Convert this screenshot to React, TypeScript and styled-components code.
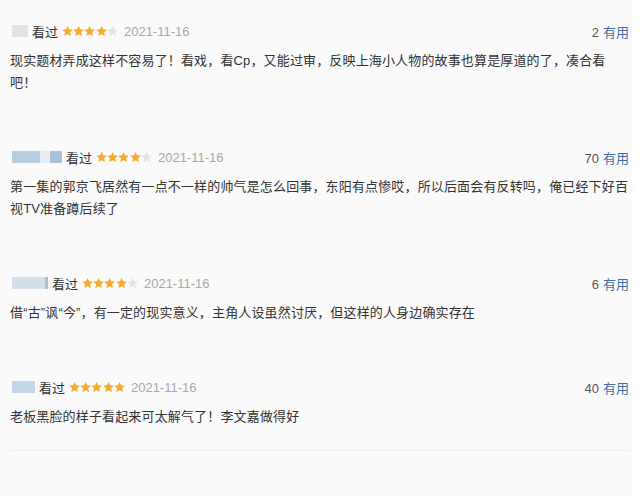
import React from "react";
import styled, { createGlobalStyle } from "styled-components";

const GlobalStyle = createGlobalStyle`
  html, body {
    margin: 0;
    padding: 0;
    background: #fafafa;
  }
  body {
    font-family: "Liberation Sans", "Noto Sans CJK SC", sans-serif;
  }
`;

const Page = styled.div`
  width: 640px;
  height: 496px;
  overflow: hidden;
  display: flex;
  background: #ffffff;
`;

const List = styled.div`
  width: 632px;
  background: #fafafa;
  padding: 21px 0 0 10px;
  box-sizing: border-box;
  display: flex;
  flex-direction: column;
`;

const Item = styled.div<{ $last?: boolean }>`
  display: flex;
  flex-direction: column;
  gap: 9px;
  width: 620px;
  padding-bottom: ${(p) => (p.$last ? "22px" : "0")};
  margin-bottom: ${(p) => (p.$last ? "0" : "53px")};
  border-bottom: ${(p) => (p.$last ? "1px solid #efefef" : "none")};
`;

const Header = styled.div`
  display: flex;
  align-items: center;
  height: 20px;
  font-size: 13px;
`;

const Name = styled.div`
  display: flex;
  align-items: center;
  height: 12px;
  margin-left: 2px;
  margin-right: 4px;
`;

const Blur = styled.span<{ $w: number; $c: string }>`
  display: block;
  width: ${(p) => p.$w}px;
  height: 12px;
  background: ${(p) => p.$c};
  filter: blur(0.6px);
`;

const Watched = styled.span`
  color: #333;
  margin-right: 4px;
`;

const Stars = styled.span`
  display: inline-flex;
  align-items: center;
  margin-right: 6px;
`;

const DateText = styled.span`
  color: #a8a8a8;
  font-size: 13px;
`;

const Votes = styled.span`
  margin-left: auto;
  color: #555;
  font-size: 13px;
  padding-right: 1px;
`;

const Useful = styled.span`
  color: #3d6fa6;
  margin-left: 4px;
`;

const Body = styled.p`
  margin: 0;
  font-size: 13px;
  line-height: 22px;
  letter-spacing: 0.15px;
  color: #333;
`;

const Star = ({ on }: { on: boolean }) => (
  <svg width="11.2" height="12" viewBox="1 0.5 22 22">
    <polygon
      points="12,1.5 15.1,8.3 22.5,9.1 17,14.1 18.5,21.5 12,17.8 5.5,21.5 7,14.1 1.5,9.1 8.9,8.3"
      fill={on ? "#f5ab2e" : "#e3e3e3"}
    />
  </svg>
);

type Review = {
  blur: { w: number; c: string }[];
  stars: number;
  votes: number;
  text: string;
};

const reviews: Review[] = [
  {
    blur: [{ w: 16, c: "#e2e2e2" }],
    stars: 4,
    votes: 2,
    text: "现实题材弄成这样不容易了！看戏，看Cp，又能过审，反映上海小人物的故事也算是厚道的了，凑合看吧！",
  },
  {
    blur: [
      { w: 28, c: "#b8cde0" },
      { w: 10, c: "#e6ecf2" },
      { w: 12, c: "#a9c2da" },
    ],
    stars: 4,
    votes: 70,
    text: "第一集的郭京飞居然有一点不一样的帅气是怎么回事，东阳有点惨哎，所以后面会有反转吗，俺已经下好百视TV准备蹲后续了",
  },
  {
    blur: [
      { w: 33, c: "#d3e0ec" },
      { w: 3, c: "#a9bfd6" },
    ],
    stars: 4,
    votes: 6,
    text: "借“古”讽“今”，有一定的现实意义，主角人设虽然讨厌，但这样的人身边确实存在",
  },
  {
    blur: [{ w: 23, c: "#c3d5e6" }],
    stars: 5,
    votes: 40,
    text: "老板黑脸的样子看起来可太解气了！李文嘉做得好",
  },
];

export default function App() {
  return (
    <>
      <GlobalStyle />
      <Page>
        <List>
          {reviews.map((r, i) => (
            <Item key={i} $last={i === reviews.length - 1}>
              <Header>
                <Name>
                  {r.blur.map((b, j) => (
                    <Blur key={j} $w={b.w} $c={b.c} />
                  ))}
                </Name>
                <Watched>看过</Watched>
                <Stars>
                  {[0, 1, 2, 3, 4].map((s) => (
                    <Star key={s} on={s < r.stars} />
                  ))}
                </Stars>
                <DateText>2021-11-16</DateText>
                <Votes>
                  {r.votes}
                  <Useful>有用</Useful>
                </Votes>
              </Header>
              <Body>{r.text}</Body>
            </Item>
          ))}
        </List>
      </Page>
    </>
  );
}
